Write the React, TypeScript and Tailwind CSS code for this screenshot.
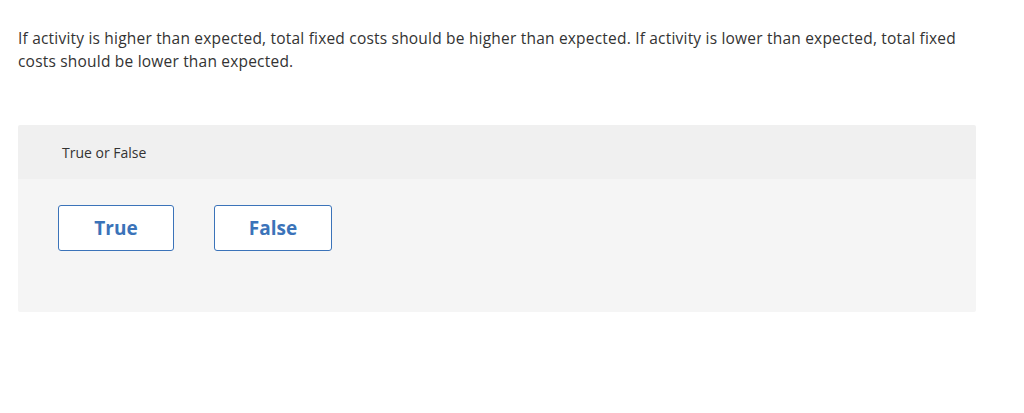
export default function App() {
  return (
    <div className="w-[1024px] h-[413px] bg-white" style={{ fontFamily: '"Open Sans", "Liberation Sans", sans-serif' }}>
      <div className="pt-[27px] pl-[18px] pr-[40px]">
        <p className="text-[15.5px] leading-[23px] tracking-[0.2px] text-[#333]">
          If activity is higher than expected, total fixed costs should be higher than expected. If activity is lower than expected, total fixed costs should be lower than expected.
        </p>
      </div>
      <div className="mt-[52px] ml-[18px] w-[958px] rounded-[2px] overflow-hidden">
        <div className="h-[54px] bg-[#f0f0f0] flex items-center pl-[44px] text-[14px] text-[#333]">True or False</div>
        <div className="h-[133px] bg-[#f5f5f5] pt-[26px] pl-[40px] flex gap-[40px] items-start">
          <button className="w-[116px] h-[46px] bg-white border border-[#3b73b9] rounded-[3px] text-[#3b73b9] font-bold text-[19px]">True</button>
          <button className="w-[118px] h-[46px] bg-white border border-[#3b73b9] rounded-[3px] text-[#3b73b9] font-bold text-[19px]">False</button>
        </div>
      </div>
    </div>
  );
}
